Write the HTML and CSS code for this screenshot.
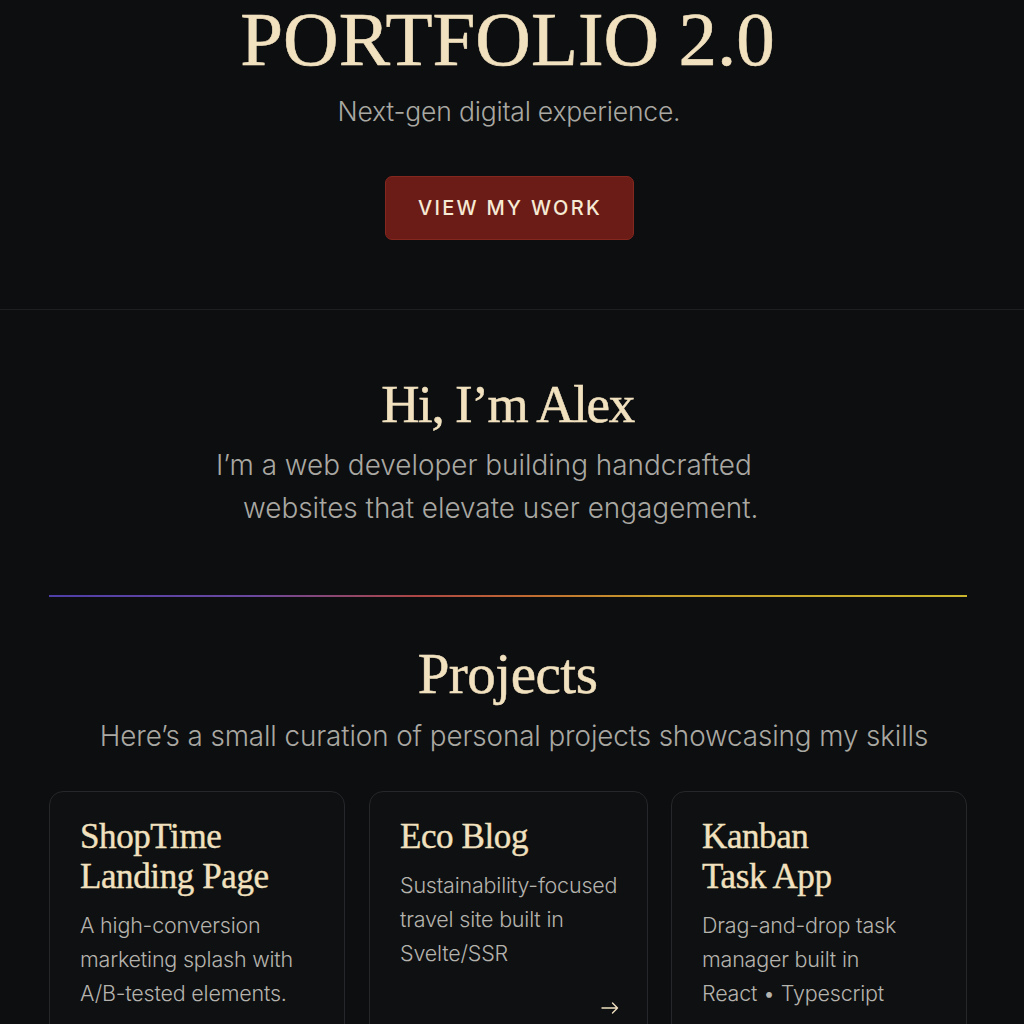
FILE: index.html
```html
<!DOCTYPE html>
<html lang="en">
<head>
<meta charset="utf-8">
<title>Portfolio 2.0</title>
<link rel="stylesheet" href="styles.css">
</head>
<body>
<div class="page">
  <header class="hero">
    <h1 class="hero-title">PORTFOLIO 2.0</h1>
    <p class="hero-sub">Next-gen digital experience.</p>
    <a class="btn" href="#projects">VIEW MY WORK</a>
  </header>
  <div class="rule"></div>
  <section class="about">
    <h2 class="about-title">Hi, I’m Alex</h2>
    <p class="about-text">
      <span class="line line-1">I’m a web developer building handcrafted</span>
      <span class="line line-2">websites that elevate user engagement.</span>
    </p>
  </section>
  <div class="grad-line"></div>
  <section class="projects" id="projects">
    <h2 class="projects-title">Projects</h2>
    <p class="projects-sub">Here’s a small curation of personal projects showcasing my skills</p>
    <div class="cards">
      <article class="card">
        <h3 class="card-title">ShopTime<br>Landing Page</h3>
        <p class="card-desc">A high-conversion<br>marketing splash with<br>A/B-tested elements.</p>
      </article>
      <article class="card">
        <h3 class="card-title">Eco Blog</h3>
        <p class="card-desc">Sustainability-focused<br>travel site built in<br>Svelte/SSR</p>
        <svg class="card-arrow" width="18" height="12" viewBox="0 0 18 12" aria-hidden="true">
          <path d="M1 6H16.5M11.5 1L16.5 6L11.5 11" fill="none" stroke="#efe0c0" stroke-width="1.4" stroke-linecap="round" stroke-linejoin="round"/>
        </svg>
      </article>
      <article class="card">
        <h3 class="card-title">Kanban<br>Task App</h3>
        <p class="card-desc">Drag-and-drop task<br>manager built in<br>React • Typescript</p>
      </article>
    </div>
  </section>
</div>
</body>
</html>
```
FILE: styles.css
```css
* { box-sizing: border-box; }

html, body {
  margin: 0;
  padding: 0;
  background: #0d0e10;
}

body {
  font-family: "Inter", "Noto Sans", sans-serif;
  color: #aaa9a4;
  overflow: hidden;
  height: 1024px;
}

.page {
  display: flex;
  flex-direction: column;
}

.hero {
  display: flex;
  flex-direction: column;
  align-items: center;
  width: 917px;
  margin-left: 49px;
  padding-bottom: 69px;
}

.hero-title {
  margin: 0;
  font-family: "Liberation Serif", "Times New Roman", serif;
  font-weight: 400;
  font-size: 77px;
  line-height: 78px;
  color: #f1e1bf;
  letter-spacing: 0;
  -webkit-text-stroke: 0.6px #f1e1bf;
}

.hero-sub {
  margin: 17px 0 0 3px;
  font-size: 26.5px;
  line-height: 32px;
  font-weight: 300;
  color: #a9a8a2;
  letter-spacing: -0.2px;
}

.btn {
  margin-top: 49px;
  margin-left: 3px;
  width: 249px;
  height: 64px;
  display: flex;
  align-items: center;
  justify-content: center;
  background: #6c1c17;
  border: 1px solid #84271f;
  border-radius: 7px;
  color: #f6ead4;
  text-decoration: none;
  font-size: 20px;
  font-weight: 500;
  letter-spacing: 2.3px;
  padding-left: 2px;
}

.rule {
  height: 1px;
  background: #1e1f22;
}

.about {
  width: 917px;
  margin-left: 49px;
  padding-top: 64px;
  display: flex;
  flex-direction: column;
  align-items: center;
}

.about-title {
  margin: 0;
  font-family: "Liberation Serif", "Times New Roman", serif;
  font-weight: 400;
  font-size: 53px;
  line-height: 60px;
  color: #f1e1bf;
  letter-spacing: -1.4px;
  -webkit-text-stroke: 0.5px #f1e1bf;
}

.about-text {
  margin: 10px 0 0;
  align-self: flex-start;
  padding-left: 167px;
  font-size: 27.9px;
  line-height: 43px;
  font-weight: 300;
  color: #a9a8a2;
  display: flex;
  flex-direction: column;
}

.line-2 { padding-left: 27px; }

.grad-line {
  margin: 65px 0 0 49px;
  width: 918px;
  height: 1.5px;
  background: linear-gradient(90deg, #5a47c4 0%, #7a52b8 22%, #c8504f 40%, #e07a38 52%, #e8b730 66%, #ecd233 100%);
  opacity: 0.85;
}

.projects {
  width: 917px;
  margin-left: 49px;
  padding-top: 45px;
  display: flex;
  flex-direction: column;
  align-items: center;
}

.projects-title {
  margin: 0;
  font-family: "Liberation Serif", "Times New Roman", serif;
  font-weight: 400;
  font-size: 57px;
  line-height: 64px;
  color: #f1e1bf;
  letter-spacing: -0.5px;
  -webkit-text-stroke: 0.5px #f1e1bf;
}

.projects-sub {
  margin: 12px 0 0 13px;
  font-size: 27.8px;
  line-height: 36px;
  font-weight: 300;
  color: #a9a8a2;
  letter-spacing: -0.1px;
}

.cards {
  margin-top: 37px;
  align-self: stretch;
  display: grid;
  grid-template-columns: 296px 279px 295px;
  column-gap: 24px;
}

.cards .card:nth-child(3) { margin-left: -1px; }

.card {
  min-height: 280px;
  border: 1px solid #26272a;
  border-radius: 14px;
  background: #0f1012;
  padding: 25px 28px 0 30px;
  display: flex;
  flex-direction: column;
}

.card-title {
  margin: 0;
  font-family: "Liberation Serif", "Times New Roman", serif;
  font-weight: 400;
  font-size: 35px;
  line-height: 40px;
  color: #f1e1bf;
  letter-spacing: -0.4px;
  -webkit-text-stroke: 0.4px #f1e1bf;
}

.card-desc {
  margin: 11px 0 0;
  font-size: 21.5px;
  line-height: 34px;
  font-weight: 300;
  color: #b5b3ad;
  letter-spacing: -0.2px;
}

.card-arrow {
  margin-top: 32px;
  align-self: flex-end;
  margin-right: 0;
}
```
